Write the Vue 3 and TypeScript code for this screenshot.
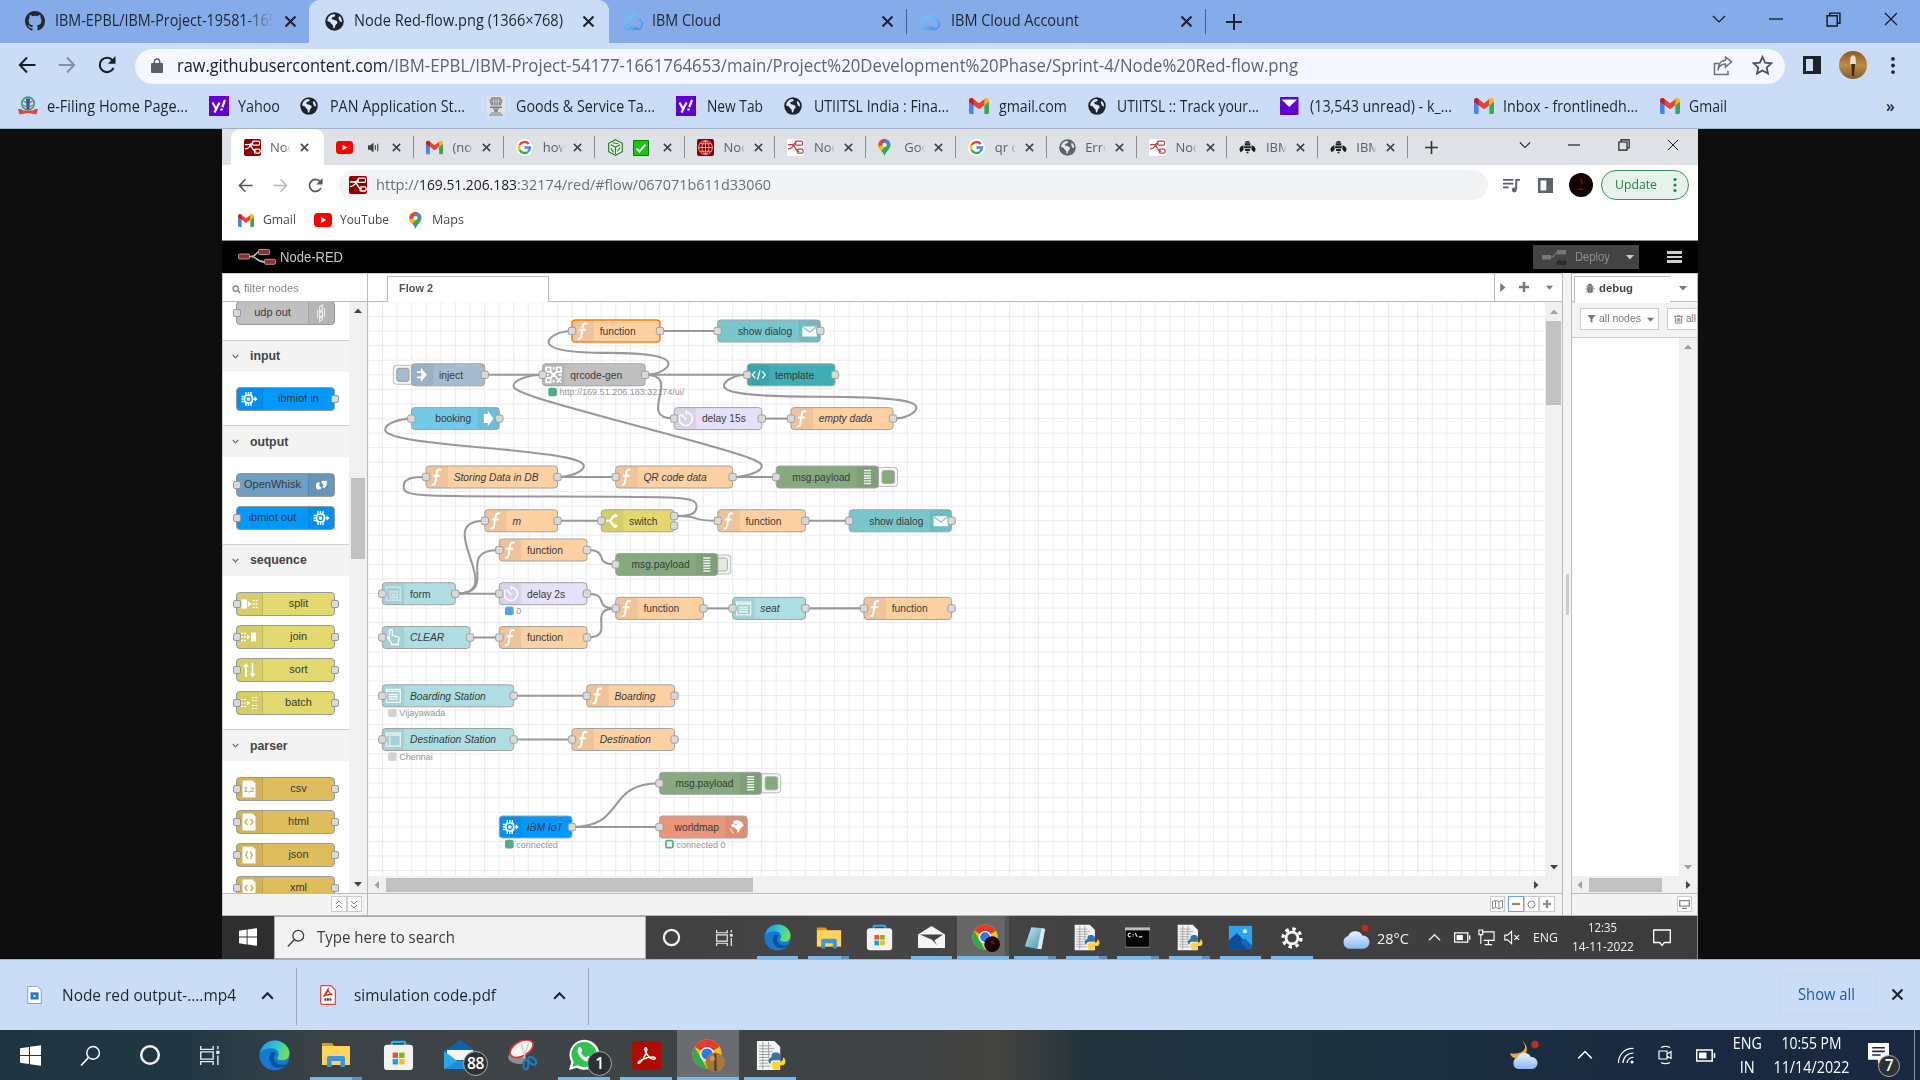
<script setup lang="ts">
import { h, type FunctionalComponent } from 'vue'

/* Icon drawn from the symbol sheet at the top of the template */
const Ico: FunctionalComponent<{ n: string; s: number; hh?: number }> = (p) =>
  h('svg', { width: p.s, height: p.hh ?? p.s, style: 'flex:none;display:block' }, [h('use', { href: '#i-' + p.n })])
Ico.props = ['n', 's', 'hh']

/* Condenses or widens a run of text to a given width in pixels */
const vFit = {
  mounted(el: HTMLElement, b: { value: number }) {
    const w = el.getBoundingClientRect().width
    if (!w || !b.value) return
    el.style.transform = `scaleX(${b.value / w})`
    el.style.marginRight = `${b.value - w}px`
  },
}

interface Mark { icon: string; text: string; x: number; tx: number; w: number }
const marks: Mark[] = [
  { icon: 'efile', text: 'e-Filing Home Page...', x: 18, tx: 47, w: 141 },
  { icon: 'yahoo', text: 'Yahoo', x: 209, tx: 238, w: 42 },
  { icon: 'globe', text: 'PAN Application St...', x: 300, tx: 330, w: 135 },
  { icon: 'emblem', text: 'Goods & Service Ta...', x: 486, tx: 516, w: 139 },
  { icon: 'yahoo', text: 'New Tab', x: 676, tx: 707, w: 56 },
  { icon: 'globe', text: 'UTIITSL India : Fina...', x: 784, tx: 814, w: 135 },
  { icon: 'gmail', text: 'gmail.com', x: 969, tx: 999, w: 68 },
  { icon: 'globe', text: 'UTIITSL :: Track your...', x: 1088, tx: 1117, w: 142 },
  { icon: 'ymail', text: '(13,543 unread) - k_...', x: 1280, tx: 1310, w: 142 },
  { icon: 'gmail', text: 'Inbox - frontlinedh...', x: 1474, tx: 1503, w: 135 },
  { icon: 'gmail', text: 'Gmail', x: 1660, tx: 1689, w: 38 },
]
const markWidth = (i: number) => (i + 1 < marks.length ? marks[i + 1].x : 1870) - marks[i].x

const innerTabs = [
  { icon: 'nrfav', text: 'Node', on: true },
  { icon: 'yt', text: '', mute: true },
  { icon: 'gmail', text: '(no s' },
  { icon: 'google', text: 'how t' },
  { icon: 'cube', text: '', check: true },
  { icon: 'redglobe', text: 'Node' },
  { icon: 'nrlight', text: 'Node' },
  { icon: 'pin', text: 'Goog' },
  { icon: 'google', text: 'qr co' },
  { icon: 'globe', text: 'Error' },
  { icon: 'nrlight', text: 'Node' },
  { icon: 'bee', text: 'IBM W' },
  { icon: 'bee', text: 'IBM W' },
]

interface PNode { label: string; color: string; icon: string; right?: boolean; in?: boolean; out?: boolean }
const sections: { name: string; nodes: PNode[] }[] = [
  { name: '', nodes: [{ label: 'udp out', color: '#c0c0c0', icon: 'udp', right: true, in: true }] },
  { name: 'input', nodes: [{ label: 'ibmiot in', color: '#0299ff', icon: 'iot', out: true }] },
  { name: 'output', nodes: [
    { label: 'OpenWhisk', color: '#6d9ec4', icon: 'whisk', right: true, in: true },
    { label: 'ibmiot out', color: '#0299ff', icon: 'iot', right: true, in: true } ] },
  { name: 'sequence', nodes: ['split', 'join', 'sort', 'batch'].map((l) => ({ label: l, color: '#e2d96e', icon: l, in: true, out: true })) },
  { name: 'parser', nodes: ['csv', 'html', 'json', 'xml'].map((l) => ({ label: l, color: '#debd5c', icon: l === 'xml' ? 'html' : l, in: true, out: true })) },
]

interface FNode {
  x: number; r: number; y: number; label: string; c: string; icon: string
  right?: boolean; it?: boolean; noIn?: boolean; noOut?: boolean; sel?: boolean; two?: boolean
  button?: 'left' | 'on' | 'off'; status?: { t: string; c: string; ring?: boolean }
}
const FN = '#fdd0a2', UI = '#aedee1', DLG = '#78c6ca', DBG = '#87a980'
const nodes: Record<string, FNode> = {
  f1: { x: 572, r: 660, y: 331, label: 'function', c: FN, icon: 'fn', sel: true },
  d1: { x: 717.6, r: 820.3, y: 331, label: 'show dialog', c: DLG, icon: 'mail', right: true },
  inj: { x: 411.4, r: 484.7, y: 374.8, label: 'inject', c: '#a6bbcf', icon: 'inject', noIn: true, button: 'left' },
  qr: { x: 542.6, r: 645.1, y: 374.8, label: 'qrcode-gen', c: '#c0c0c0', icon: 'qr', status: { t: 'http://169.51.206.183:32174/ui/', c: '#5a8' } },
  tpl: { x: 747.3, r: 835, y: 374.8, label: 'template', c: '#3fadb5', icon: 'code' },
  bk: { x: 411.4, r: 499.3, y: 418.6, label: 'booking', c: '#73c7e7', icon: 'arrow', right: true },
  d15: { x: 674.2, r: 761.8, y: 418.6, label: 'delay 15s', c: '#e6e0f8', icon: 'timer' },
  ed: { x: 791, r: 893, y: 418.6, label: 'empty dada', c: FN, icon: 'fn', it: true },
  st: { x: 426, r: 557.5, y: 477, label: 'Storing Data in DB', c: FN, icon: 'fn', it: true },
  qd: { x: 615.7, r: 732.6, y: 477, label: 'QR code data', c: FN, icon: 'fn', it: true },
  m1: { x: 776.2, r: 878.5, y: 477, label: 'msg.payload', c: DBG, icon: 'bars', right: true, noOut: true, button: 'on' },
  m: { x: 484.8, r: 557.6, y: 520.8, label: 'm', c: FN, icon: 'fn', it: true },
  sw: { x: 601.3, r: 674.2, y: 520.8, label: 'switch', c: '#e2d96e', icon: 'switch', two: true },
  f2: { x: 717.8, r: 805.4, y: 520.8, label: 'function', c: FN, icon: 'fn' },
  d2: { x: 849.2, r: 951.6, y: 520.8, label: 'show dialog', c: DLG, icon: 'mail', right: true },
  f3: { x: 499.3, r: 587, y: 550, label: 'function', c: FN, icon: 'fn' },
  m2: { x: 615.7, r: 717.8, y: 564.5, label: 'msg.payload', c: DBG, icon: 'bars', right: true, noOut: true, button: 'off' },
  fm: { x: 382.3, r: 455.3, y: 593.7, label: 'form', c: UI, icon: 'form' },
  d2s: { x: 499.3, r: 587, y: 593.7, label: 'delay 2s', c: '#e6e0f8', icon: 'timer', status: { t: '0', c: '#53a3f3' } },
  f4: { x: 615.7, r: 703.4, y: 608.4, label: 'function', c: FN, icon: 'fn' },
  se: { x: 732.6, r: 805.5, y: 608.4, label: 'seat', c: UI, icon: 'list', it: true },
  f5: { x: 864, r: 951.6, y: 608.4, label: 'function', c: FN, icon: 'fn' },
  cl: { x: 382.3, r: 470, y: 637.5, label: 'CLEAR', c: UI, icon: 'hand', it: true },
  f6: { x: 499.3, r: 587, y: 637.5, label: 'function', c: FN, icon: 'fn' },
  bs: { x: 382.3, r: 513.7, y: 695.8, label: 'Boarding Station', c: UI, icon: 'list', it: true, status: { t: 'Vijayawada', c: '#d3d3d3' } },
  bo: { x: 586.7, r: 674.5, y: 695.8, label: 'Boarding', c: FN, icon: 'fn', it: true },
  ds: { x: 382.3, r: 513.7, y: 739.5, label: 'Destination Station', c: UI, icon: 'table', it: true, status: { t: 'Chennai', c: '#d3d3d3' } },
  de: { x: 572, r: 674.5, y: 739.5, label: 'Destination', c: FN, icon: 'fn', it: true },
  m3: { x: 659.4, r: 761.7, y: 783.3, label: 'msg.payload', c: DBG, icon: 'bars', right: true, noOut: true, button: 'on' },
  iot: { x: 499.3, r: 572, y: 827, label: 'IBM IoT', c: '#0299ff', icon: 'iot', it: true, noIn: true, status: { t: 'connected', c: '#5a8' } },
  wm: { x: 659.4, r: 747.2, y: 827, label: 'worldmap', c: '#e9967a', icon: 'world', right: true, noOut: true, status: { t: 'connected 0', c: '#5a8', ring: true } },
}
const links: [string, string][] = [
  ['f1', 'd1'], ['inj', 'qr'], ['qr', 'f1'], ['qr', 'tpl'], ['qr', 'd15'], ['d15', 'ed'], ['ed', 'tpl'], ['st', 'bk'],
  ['st', 'qd'], ['qd', 'qr'], ['qd', 'm1'], ['sw', 'st'], ['m', 'sw'], ['sw', 'f2'], ['f2', 'd2'], ['fm', 'm'], ['fm', 'f3'],
  ['fm', 'd2s'], ['f3', 'm2'], ['d2s', 'f4'], ['f6', 'f4'], ['f4', 'se'], ['se', 'f5'], ['cl', 'f6'], ['bs', 'bo'],
  ['ds', 'de'], ['iot', 'm3'], ['iot', 'wm'],
]
const K = 0.729
function wire([a, b]: [string, string]): string {
  const A = nodes[a], B = nodes[b]
  const ox = A.r, oy = A.two ? A.y - 4.8 : A.y, dx0 = B.x, dy0 = B.y
  const dx = dx0 - ox, dy = dy0 - oy, W = 100 * K, H = 30 * K
  if (dx > 0) {
    const d = Math.hypot(dx, dy)
    const s = d < W ? 0.75 - 0.75 * ((W - d) / W) : 0.75
    return `M${ox} ${oy}C${ox + W * s} ${oy} ${dx0 - W * s} ${dy0} ${dx0} ${dy0}`
  }
  const s = 0.4 - 0.2 * Math.max(0, (W - Math.min(Math.abs(dx), Math.abs(dy))) / W)
  const up = dy <= 0, cp = H / 2
  const mx = dx0 - dx / 2, my = dy0 - dy / 2, y1 = (dy0 + my) / 2
  const tx = ox + W * s, bx = dx0 - W * s
  const ty = up ? Math.max(y1 - dy / 2, oy - cp) : Math.min(y1 - dy / 2, oy + cp)
  const by = up ? Math.min(y1, dy0 + cp) : Math.max(y1, dy0 - cp)
  const x1 = (ox + tx) / 2
  let c1 = up ? Math.min(oy, ty + cp) : Math.max(oy, ty - cp)
  const c2 = up ? Math.max(my, ty - cp) : Math.min(my, ty + cp)
  let c3 = up ? Math.min(my, by + cp) : Math.max(my, by - cp)
  const sg = up ? -1 : 1
  if (Math.abs(c2 - (ty + sg * cp)) < 0.01) {
    if (Math.abs(dy) < cp * 10) c1 = ty - (sg * cp) / 2
    c3 = by - (sg * cp) / 2
  }
  return `M${ox} ${oy}C${x1} ${oy} ${tx} ${c1} ${tx} ${ty}S${x1} ${c2} ${mx} ${my}S${bx} ${c3} ${bx} ${by}S${(dx0 + bx) / 2} ${dy0} ${dx0} ${dy0}`
}

const innerApps = [
  { n: 'edge', s: 27, u: 1 }, { n: 'folder', s: 26, u: 2 }, { n: 'store', s: 27, u: 0 }, { n: 'openmail', s: 27, u: 1 },
  { n: 'chromered', s: 28, u: 1, on: true }, { n: 'note', s: 26, u: 2 }, { n: 'py', s: 27, u: 2 }, { n: 'cmd', s: 25, u: 2 },
  { n: 'py', s: 27, u: 2 }, { n: 'photos', s: 25, u: 1 }, { n: 'gear', s: 22, u: 1 },
]
const apps = [
  { n: 'edge', s: 31, u: 0 }, { n: 'folder', s: 30, u: 2 }, { n: 'store', s: 31, u: 0 }, { n: 'winmail', s: 32, u: 0, badge: '88' },
  { n: 'snip', s: 31, u: 0 }, { n: 'wa', s: 32, u: 1, badge: '1' }, { n: 'acro', s: 29, u: 1 }, { n: 'chromegold', s: 33, u: 1, on: true }, { n: 'py', s: 31, u: 1 },
]
</script>

<template>
  <svg class="sheet" width="0" height="0" aria-hidden="true">
    <defs>
      <linearGradient id="g-edge" x1="0" y1="0" x2="1" y2="0.3"><stop offset="0" stop-color="#1a8fe0" /><stop offset=".55" stop-color="#2fc3d8" /><stop offset="1" stop-color="#6be05a" /></linearGradient>
      <linearGradient id="g-ibm" x1="0" y1="0" x2="1" y2="1"><stop offset="0" stop-color="#66d9ee" /><stop offset="1" stop-color="#4589ff" /></linearGradient>
      <linearGradient id="g-cloud" x1="0" y1="0" x2="0" y2="1"><stop offset="0" stop-color="#eaf2ff" /><stop offset="1" stop-color="#8bb7f2" /></linearGradient>
      <linearGradient id="g-note" x1="0" y1="0" x2="1" y2="1"><stop offset="0" stop-color="#c9e9ee" /><stop offset="1" stop-color="#3a93ad" /></linearGradient>
      <linearGradient id="g-av" x1="0" y1="0" x2="0" y2="1"><stop offset="0" stop-color="#8a5a24" /><stop offset=".5" stop-color="#c08a45" /><stop offset="1" stop-color="#7a6230" /></linearGradient>
    </defs>
    <symbol id="i-github" viewBox="0 0 16 16"><path fill="#24292f" d="M8 0C3.58 0 0 3.58 0 8c0 3.54 2.29 6.53 5.47 7.59.4.07.55-.17.55-.38 0-.19-.01-.82-.01-1.49-2.01.37-2.53-.49-2.69-.94-.09-.23-.48-.94-.82-1.13-.28-.15-.68-.52-.01-.53.63-.01 1.08.58 1.23.82.72 1.21 1.87.87 2.33.66.07-.52.28-.87.51-1.07-1.78-.2-3.64-.89-3.64-3.95 0-.87.31-1.59.82-2.15-.08-.2-.36-1.02.08-2.12 0 0 .67-.21 2.2.82a7.6 7.6 0 0 1 4 0c1.53-1.04 2.2-.82 2.2-.82.44 1.1.16 1.92.08 2.12.51.56.82 1.27.82 2.15 0 3.07-1.87 3.75-3.65 3.95.29.25.54.73.54 1.48 0 1.07-.01 1.93-.01 2.2 0 .21.15.46.55.38A8 8 0 0 0 16 8c0-4.42-3.58-8-8-8z" /></symbol>
    <symbol id="i-globe" viewBox="0 0 16 16"><circle cx="8" cy="8" r="7.800" fill="currentColor" /><path fill="#dce6f6" d="M7 1.800c1.600.3 2 .9 1.300 1.700-.8.800-2.300.5-2.700 1.600-.3.900.8 1.200 1.600 1.500 1.300.400 2.800.600 3.200 1.800.3 1.200-1 1.600-1.500 2.600-.4.900-.2 2-1.400 2.900-.7-.3-.5-1.400-.6-2.200-.2-1.200-1.600-1.200-1.900-2.300-.2-.9-1.300-1.500-3-1.900C2 4.800 4 2.300 7 1.800zM12.300 3.600c1.200 1.100 2 2.600 1.900 4.600-.8.500-1.700-.2-2-1-.3-1-1-1.700-.7-2.500.1-.5.400-.8.800-1.100z" /></symbol>
    <symbol id="i-ibm" viewBox="0 0 20 20"><path d="M6 17.500a4 4 0 0 1-1-7.900A5.300 5.300 0 0 1 15 8.500a4.600 4.600 0 0 1-.7 9H6M5 12.500c1 3 3 3.500 9 3.500" fill="none" stroke="url(#g-ibm)" stroke-width="1.500" /><path d="M6 3l.7 1.600M9.800 1.200v2M13.600 3l-.7 1.600M3.200 6l1.300.8" stroke="#67c9f5" stroke-width="1.200" /></symbol>
    <symbol id="i-x" viewBox="0 0 12 12"><path d="M2 2l8 8M10 2l-8 8" stroke="currentColor" stroke-width="1.700" /></symbol>
    <symbol id="i-xthin" viewBox="0 0 14 14"><path d="M1 1l12 12M13 1L1 13" stroke="currentColor" stroke-width="1.100" /></symbol>
    <symbol id="i-min" viewBox="0 0 14 14"><path d="M0 7h14" stroke="currentColor" stroke-width="1.300" /></symbol>
    <symbol id="i-restore" viewBox="0 0 14 14"><path d="M1 3.500h9.500V13H1zM3.500 3.500V1H13v9.500h-2.500" fill="none" stroke="currentColor" stroke-width="1.300" /></symbol>
    <symbol id="i-down" viewBox="0 0 14 14"><path d="M1 4l6 6 6-6" fill="none" stroke="currentColor" stroke-width="1.200" /></symbol>
    <symbol id="i-chev" viewBox="0 0 8 8"><path d="M.8 2.200L4 5.500l3.200-3.300" fill="none" stroke="#666" stroke-width="1.300" /></symbol>
    <symbol id="i-up" viewBox="0 0 14 14"><path d="M1 10l6-6 6 6" fill="none" stroke="currentColor" stroke-width="1.300" /></symbol>
    <symbol id="i-upbold" viewBox="0 0 14 14"><path d="M2 10l5-5 5 5" fill="none" stroke="currentColor" stroke-width="2" /></symbol>
    <symbol id="i-plus" viewBox="0 0 16 16"><path d="M8 0v16M0 8h16" stroke="currentColor" stroke-width="2" /></symbol>
    <symbol id="i-back" viewBox="0 0 18 18"><path d="M9 1.500L1.800 9 9 16.500M2 9h15.500" fill="none" stroke="currentColor" stroke-width="2" /></symbol>
    <symbol id="i-fwd" viewBox="0 0 18 18"><path d="M9 1.500L16.200 9 9 16.500M16 9H.5" fill="none" stroke="currentColor" stroke-width="2" /></symbol>
    <symbol id="i-reload" viewBox="0 0 18 18"><path d="M15.500 12A7.200 7.200 0 1 1 14.600 4.400L16 6" fill="none" stroke="currentColor" stroke-width="2.100" /><path d="M17.500 0v7.700H9.900z" fill="currentColor" /></symbol>
    <symbol id="i-lock" viewBox="0 0 12 15"><path fill="#5a6068" fill-rule="evenodd" d="M2.600 5V3.600a3.400 3.400 0 0 1 6.800 0V5H11a1 1 0 0 1 1 1v8a1 1 0 0 1-1 1H1a1 1 0 0 1-1-1V6a1 1 0 0 1 1-1zm1.500 0h3.800V3.600a1.900 1.900 0 0 0-3.800 0z" /></symbol>
    <symbol id="i-share" viewBox="0 0 20 20"><path d="M6 7.500H1.500v11H15V15M5 14.500c.5-4 3-6.500 7.500-6.500V11l6-5.200-6-4.800v3.200C7.500 4.500 5 9 5 14.500z" fill="none" stroke="#6b7280" stroke-width="1.500" /></symbol>
    <symbol id="i-star" viewBox="0 0 20 20"><path d="M10 1.800l2.500 5.400 5.900.7-4.400 4 1.200 5.800L10 14.800l-5.200 2.900L6 11.900l-4.400-4 5.900-.7z" fill="none" stroke="#4b5260" stroke-width="1.700" /></symbol>
    <symbol id="i-panel" viewBox="0 0 18 18"><path d="M0 0h18v18H0zM3 3v12h7V3z" fill-rule="evenodd" fill="currentColor" /></symbol>
    <symbol id="i-avatar" viewBox="0 0 28 28"><circle cx="14" cy="14" r="14" fill="url(#g-av)" /><path d="M11.500 6l2.500-2 2.500 2 .5 7h-6z" fill="#eadfcb" /><path d="M12.500 13h3.500l-1 12h-2z" fill="#3b2a1c" /></symbol>
    <symbol id="i-dots" viewBox="0 0 4 18"><circle cx="2" cy="2" r="2" fill="currentColor" /><circle cx="2" cy="9" r="2" fill="currentColor" /><circle cx="2" cy="16" r="2" fill="currentColor" /></symbol>
    <symbol id="i-efile" viewBox="0 0 20 20"><circle cx="10" cy="7.500" r="6.300" fill="#cfe0f5" stroke="#3aa56a" stroke-width="1.700" /><path d="M8 2.500h4l-.5 11h-3z" fill="#2a5caa" /><path d="M5.500 5l3 2M14.500 5l-3 2M5 9l3 1.500M15 9l-3 1.500" stroke="#d94848" stroke-width="1.200" /><path d="M0 13h3l2 1.500h10L17 13h3l-1.500 5.500-8.500-1.500-8.500 1.500z" fill="#d94848" /></symbol>
    <symbol id="i-yahoo" viewBox="0 0 20 20"><path fill="#5f01d1" d="M0 0h20v20H0z" /><path d="M3.500 6.500l3.600 6.500M10.500 6.500L5.500 16.500" stroke="#fff" stroke-width="2.200" /><path d="M16 4l-2.700 7" stroke="#fff" stroke-width="2.200" /><circle cx="12.600" cy="13.500" r="1.300" fill="#fff" /></symbol>
    <symbol id="i-emblem" viewBox="0 0 20 20"><path fill="#dfe2e6" d="M1 0h18v20H1z" /><path d="M6 1h8l2.500 3.500-1.500 5H5l-1.500-5z" fill="#8a8d92" /><path d="M7.500 2v7M10 1v9M12.500 2v7M5 5h10" stroke="#c9ccd0" stroke-width=".8" /><path d="M4 10.500h12v1.500H4zM7 12.500h6v1.300H7zM8.500 14h3v2h-3zM5 16.500h10v1H5zM3 18.500h14v1H3z" fill="#777b80" /></symbol>
    <symbol id="i-gmail" viewBox="0 0 20 16"><path fill="#4285f4" d="M0 3v11.500c0 .8.700 1.500 1.500 1.500H4.600V7z" /><path fill="#34a853" d="M20 3v11.500c0 .8-.7 1.500-1.500 1.500h-3.100V7z" /><path fill="#ea4335" d="M0 2.500C0 .5 2.200-.6 3.800.6L10 5.300 16.200.6 15.400 7.200 10 11.200 4.600 7.200 0 3.800z" /><path fill="#fbbc04" d="M15.400 1.200l.8-.6c1.600-1.200 3.800-.1 3.800 1.900v1.300l-4.600 3.400z" /><path fill="#c5221f" d="M0 2.500v1.300l4.600 3.400V1.200L3.800.6C2.200-.6 0 .5 0 2.500z" /></symbol>
    <symbol id="i-ymail" viewBox="0 0 20 20"><rect y="1" width="18.500" height="18" rx="1" fill="#5f01d1" /><path d="M1.500 3.500h15.500L9.300 11z" fill="#fff" /></symbol>
    <symbol id="i-yt" viewBox="0 0 18 14"><rect width="18" height="14" rx="3.500" fill="#f00" /><path d="M7 4l5 3-5 3z" fill="#fff" /></symbol>
    <symbol id="i-google" viewBox="0 0 18 18"><circle cx="9" cy="9" r="9" fill="#fff" /><path d="M13.500 5.200A6 6 0 0 0 3.800 6.300" fill="none" stroke="#ea4335" stroke-width="2.500" /><path d="M3.800 6.300a6 6 0 0 0 0 5.400" fill="none" stroke="#fbbc05" stroke-width="2.500" /><path d="M3.800 11.700a6 6 0 0 0 8.800 2" fill="none" stroke="#34a853" stroke-width="2.500" /><path d="M9 9h5.800a6 6 0 0 1-2.200 4.700" fill="none" stroke="#4285f4" stroke-width="2.500" /></symbol>
    <symbol id="i-cube" viewBox="0 0 18 18"><path d="M9 .8l7.200 3.700v9L9 17.200l-7.200-3.700v-9z" fill="#e7f3e4" stroke="#2e7d32" stroke-width="1.300" /><path d="M4 6l5 2.500L14 6M9 8.500V16M4 10l3 4M11 13l3-4M6 4l6 1" fill="none" stroke="#2e7d32" stroke-width="1.200" /></symbol>
    <symbol id="i-check" viewBox="0 0 16 16"><path d="M.5.500h15v15H.5z" fill="#16c60c" stroke="#0c7a08" /><path d="M3.500 8.500l3 3 6-7" fill="none" stroke="#fff" stroke-width="2" /></symbol>
    <symbol id="i-redglobe" viewBox="0 0 18 18"><rect width="18" height="18" rx="2" fill="#8f0000" /><circle cx="9" cy="9" r="7.300" fill="none" stroke="#e6b5b5" /><path d="M9 1.500v15M1.500 9h15M3 5h12M3 13h12M9 1.700c-5 4-5 10.600 0 14.600M9 1.700c5 4 5 10.600 0 14.600" fill="none" stroke="#e6b5b5" stroke-width=".9" /></symbol>
    <symbol id="i-nrshape" viewBox="0 0 18 18"><path d="M1 6h4c4 0 3 7 8 7M5 6c3 0 3-2 5-2" fill="none" stroke="currentColor" stroke-width="1.300" /><rect x="9" y="2.200" width="7.500" height="4.200" rx="1.200" fill="none" stroke="currentColor" stroke-width="1.300" /><rect x="11" y="10.800" width="6" height="4.200" rx="1.200" fill="none" stroke="currentColor" stroke-width="1.300" /><path d="M1 10.500c4 .5 5-3 8-5" fill="none" stroke="currentColor" stroke-width="1.300" /></symbol>
    <symbol id="i-nrfav" viewBox="0 0 18 18"><rect width="18" height="18" rx="2" fill="#8f0000" /><use href="#i-nrshape" width="18" height="18" color="#fff" /></symbol>
    <symbol id="i-nrlight" viewBox="0 0 18 18"><rect width="18" height="18" rx="2" fill="#fff" /><use href="#i-nrshape" width="18" height="18" color="#b5454a" /></symbol>
    <symbol id="i-pin" viewBox="0 0 12 17"><path d="M6 0a6 6 0 0 1 6 6c0 4-4.500 6-6 11C4.500 12 0 10 0 6a6 6 0 0 1 6-6z" fill="#34a853" /><path d="M0 6a6 6 0 0 1 1.500-4L7 7l-4.500 5C1 10 0 8.500 0 6z" fill="#fbbc04" /><path d="M1.400 2A6 6 0 0 1 7.500.2L3.500 6.500.2 7.500C-.2 5 .3 3.500 1.400 2z" fill="#ea4335" /><path d="M7.500.2A6 6 0 0 1 11.400 3.400L6 8 3.500 6z" fill="#4285f4" /><circle cx="6" cy="6" r="2.100" fill="#fff" /></symbol>
    <symbol id="i-bee" viewBox="0 0 18 14"><path d="M9 0c2 0 2.600 1 2.600 2H6.400C6.400 1 7 0 9 0zM6 2.600h6v2.200H6zM5.500 5.600h7v2.200h-7zM6.500 8.600h5v2h-5zM8 11.400h2v1.800H8zM4.800 4.500v5L2 12C-.8 9.500.5 5.500 4.800 4.500zM13.200 4.500v5L16 12c2.800-2.500 1.500-6.500-2.800-7.500z" fill="#1c1c1c" /></symbol>
    <symbol id="i-speaker" viewBox="0 0 14 14"><path d="M0 4.500h2.500L6 1.500v11L2.500 9.500H0z" fill="#444" /><path d="M8 4.500v5M10.500 3v8" stroke="#444" stroke-width="1.200" /></symbol>
    <symbol id="i-queue" viewBox="0 0 18 16"><path d="M0 2h11M0 6h11M0 10h6M14 1v11M14 2h4" stroke="#5f6368" stroke-width="2" /><circle cx="12" cy="12.800" r="2.600" fill="#5f6368" /></symbol>
    <symbol id="i-avred" viewBox="0 0 24 24"><circle cx="12" cy="12" r="12" fill="#120203" /><path d="M11 6l2-1 1 6-2 1zM7 17l5-2 5 2z" fill="#5e1010" /></symbol>
    <symbol id="i-nrlogo" viewBox="0 0 38 16"><path d="M8 7.500h5c6 0 4-5 9-5M13 7.500c6 0 5 5.500 14 5.500" fill="none" stroke="#bbb" stroke-width="1.500" /><g fill="#8f2f2f" stroke="#c0b0b0" stroke-width=".8"><rect x=".5" y="5" width="11" height="5" rx="1" /><rect x="20.500" y=".5" width="11" height="5" rx="1" /><rect x="26.500" y="10.300" width="11" height="5" rx="1" /></g></symbol>
    <symbol id="i-deploy" viewBox="0 0 24 16"><path d="M7 8h3c4 0 2-5 6-5" fill="none" stroke="#777" stroke-width="1.200" /><path d="M0 6h9v4.500H0zM15 1h9v4.500h-9z" fill="#777" /><path d="M15 11.500h9V16h-9z" fill="#2c2c2c" /></symbol>
    <symbol id="i-search" viewBox="0 0 20 20"><circle cx="12.500" cy="7.500" r="6" fill="none" stroke="currentColor" stroke-width="1.400" /><path d="M8 12l-7 7.500" stroke="currentColor" stroke-width="1.500" /></symbol>
    <symbol id="i-find" viewBox="0 0 10 10"><circle cx="4" cy="4" r="3" fill="none" stroke="#777" stroke-width="1.300" /><path d="M6.200 6.200L9 9" stroke="#777" stroke-width="1.500" /></symbol>
    <symbol id="i-caret" viewBox="0 0 8 8"><path d="M0 2h8L4 6.500z" fill="currentColor" /></symbol>
    <symbol id="i-bug" viewBox="0 0 12 12"><path d="M3.500 3a2.500 2.500 0 0 1 5 0zM3 4h2.600v7C4 11 3 10 3 8zM9 4H6.400v7C8 11 9 10 9 8zM0 6.500h3M9 6.500h3M1 3l2 1.500M11 3L9 4.500M1 11l2-2M11 11L9 9" fill="#777" stroke="#777" stroke-width=".9" /></symbol>
    <symbol id="i-filter" viewBox="0 0 10 10"><path d="M.5 0h9L6 4.500V9L4 7.500v-3z" fill="#777" /></symbol>
    <symbol id="i-trash" viewBox="0 0 10 10"><path d="M0 1.500h10M3 1h4M1.500 2v7h7V2M3.500 3.500v4M5 3.500v4M6.500 3.500v4" fill="none" stroke="#888" stroke-width="1.100" /></symbol>
    <!-- node icons -->
    <symbol id="i-fn" viewBox="0 0 22 22"><path d="M15 4.300c-2-1.700-3.800-.6-4.200 2.200L9.300 16c-.4 2.500-1.700 3.200-3.300 2.200M7.200 9.800h6.600" fill="none" stroke="#fff" stroke-width="2" /></symbol>
    <symbol id="i-mail" viewBox="0 0 22 22"><path d="M4 6.500h14.500v10H4z" fill="#fff" /><path d="M4 6.700l7.300 5.500 7.200-5.500" fill="none" stroke="#78c6ca" stroke-width="1.300" /></symbol>
    <symbol id="i-inject" viewBox="0 0 22 22"><path d="M9.500 4l6 7-6 7v-3.500h-4V12.700h4.500V9.300H5.500V7.500h4z" fill="#fff" /></symbol>
    <symbol id="i-arrow" viewBox="0 0 22 22"><path d="M6.500 6.500h4V3l5.500 8-5.500 8v-3.500h-4z" fill="#fff" /></symbol>
    <symbol id="i-qr" viewBox="0 0 22 22"><g fill="none" stroke="#fff" stroke-width="1.700"><path d="M3.500 3.500H8v4.500H3.500zM14 3.500h4.500V8H14zM3.500 14H8v4.500H3.500z" /><path d="M8 8l6 6M14 8l-6 6M11 3v3M11 16v3M3 11h3M16 11h3M14 14l4.500 4.500M18.500 14L14 18.500" /></g><path d="M9 9h4v4H9z" fill="#fff" /></symbol>
    <symbol id="i-code" viewBox="0 0 22 22"><path d="M8 7.500L5 11l3 3.500M15 7.500l3 3.500-3 3.500M12.700 6.500l-2.400 9" fill="none" stroke="#fff" stroke-width="1.300" /></symbol>
    <symbol id="i-timer" viewBox="0 0 22 22"><path d="M12 4.500a6.700 6.700 0 1 1-5.500 2.200M12 3v4M12 12L7.500 7" fill="none" stroke="#fff" stroke-width="1.500" /></symbol>
    <symbol id="i-bars" viewBox="0 0 22 22"><path d="M7.500 4.500h7M7.500 7.100h7M7.500 9.700h7M7.500 12.300h7M7.500 14.900h7M7.500 17.500h7" stroke="#fff" stroke-opacity=".85" stroke-width="1.400" /></symbol>
    <symbol id="i-switch" viewBox="0 0 22 22"><path d="M5 11h3c3 0 2-5 6-5h1M8 11c3 0 2 5.500 6 5.500h1" fill="none" stroke="#fff" stroke-width="2" /><path d="M13 3.500l4 2.500-4 2.500zM13 13.800l4 2.500-4 2.500z" fill="#fff" /></symbol>
    <symbol id="i-form" viewBox="0 0 22 22"><path d="M4 4.500h14v13H4zM8 9h7v6H8z" fill="none" stroke="#fff" stroke-opacity=".45" stroke-width="1.500" /><path d="M10 11h3v3h-3z" fill="#fff" opacity=".45" /></symbol>
    <symbol id="i-list" viewBox="0 0 22 22"><path d="M4 4.500h14v13H4z" fill="none" stroke="#fff" stroke-opacity=".8" stroke-width="1.300" /><path d="M4 6.300h14M6.500 9.700h9M6.500 12h9M6.500 14.300h9" stroke="#fff" stroke-opacity=".85" stroke-width="1.400" /></symbol>
    <symbol id="i-table" viewBox="0 0 22 22"><path d="M4 4.500h14v13H4zM4 6.500h14M7.500 8v9" fill="none" stroke="#fff" stroke-opacity=".7" stroke-width="1.400" /></symbol>
    <symbol id="i-hand" viewBox="0 0 22 22"><path d="M7 9V4.500a1.500 1.500 0 0 1 3 0V9l6 1.500c1.500.5 1 3 0 5V18H9v-2l-4-5c0-1.500 1-1.500 2-.5v2" fill="none" stroke="#fff" stroke-opacity=".9" stroke-width="1.300" /></symbol>
    <symbol id="i-iot" viewBox="0 0 22 22"><rect x="6" y="6.500" width="9" height="9" rx="2" fill="#fff" /><path d="M3.500 8.500H6M3.500 11H6M3.500 13.500H6M8 4v3M10.500 4v3M13 4v3M8 15v3M10.500 15v3M13 15v3M15 11h3" stroke="#fff" stroke-width="1.400" /><path d="M16.500 8.200l3 2.800-3 2.800z" fill="#fff" /><circle cx="10.500" cy="11" r="2.500" fill="none" stroke="#0299ff" stroke-width="1.300" /></symbol>
    <symbol id="i-world" viewBox="0 0 22 22"><path d="M8 5l4-1 4 1.500 2.500 4-1.500 1.500-1.500 1-1.500 3.500-1.500 1.500-1-3.500-2.500-2-2.500-.5-.5-2.500 2.500-.5z" fill="#fff" /><path d="M9.500 8.500l2.500-.5" stroke="#e9967a" stroke-width="1.200" /><path d="M5 12.500l1.500 3 2 1.500" stroke="#fff" fill="none" /></symbol>
    <symbol id="i-udp" viewBox="0 0 22 22"><path d="M9.500 5l3-2v4l-3 3zM9.500 11l3-2v4l-3 3zM9.500 16.500l3-2v3l-3 2zM14.500 6v9M7.500 8v8" stroke="#fff" fill="none" stroke-width="1.100" opacity=".75" /></symbol>
    <symbol id="i-whisk" viewBox="0 0 22 22"><path d="M6 10.500a3 3 0 0 1 4-2l-1 2.500 2.500 3a3 3 0 0 1-5.500-.5zM16.500 11.500a3 3 0 0 1-4 2l1-2.500L11 8a3 3 0 0 1 4-1l2-.5z" fill="#fff" /></symbol>
    <symbol id="i-split" viewBox="0 0 22 22"><path d="M3.500 6.500h5.500v9H3.500zM10 8l3.500 3-3.500 3z" fill="#fff" /><path d="M14.500 7.500h5M14.500 11h5M14.500 14.500h5" stroke="#fff" stroke-width="1.500" stroke-dasharray="2 1" /></symbol>
    <symbol id="i-join" viewBox="0 0 22 22"><path d="M13 6.500h5v9h-5zM9 8l3 3-3 3z" fill="#fff" /><path d="M3 7.500h5M3 11h5M3 14.500h5" stroke="#fff" stroke-width="1.500" stroke-dasharray="2 1" /></symbol>
    <symbol id="i-sort" viewBox="0 0 22 22"><path d="M8 6v12M14.500 4v12" stroke="#fff" stroke-width="1.700" /><path d="M5 8l3-4 3 4zM11.500 14.500l3 4 3-4z" fill="#fff" /></symbol>
    <symbol id="i-batch" viewBox="0 0 22 22"><path d="M3 7.500h5M3 11h5M3 14.500h5M14 5.500h5M14 8.500h5M14 13.500h5M14 16.500h5" stroke="#fff" stroke-width="1.200" stroke-dasharray="2 1" /><path d="M9 8.500l3 2.500-3 2.500z" fill="#fff" /></symbol>
    <symbol id="i-page" viewBox="0 0 22 22"><path d="M4.500 2.500h10l3 3v14h-13z" fill="#fff" /></symbol>
    <symbol id="i-csv" viewBox="0 0 22 22"><use href="#i-page" width="22" height="22" /><text x="11" y="14" font-size="8" font-weight="700" text-anchor="middle" fill="#cfae50" font-family="Liberation Sans, sans-serif">1,2</text></symbol>
    <symbol id="i-html" viewBox="0 0 22 22"><use href="#i-page" width="22" height="22" /><path d="M9.500 8L7 11l2.500 3M12.500 8l2.500 3-2.500 3" fill="none" stroke="#cfae50" stroke-width="1.400" /></symbol>
    <symbol id="i-json" viewBox="0 0 22 22"><use href="#i-page" width="22" height="22" /><path d="M9.800 7.500c-1.800 0-.3 3-2.300 3.500 2 .5.500 3.500 2.300 3.500M12.200 7.500c1.800 0 .3 3 2.300 3.500-2 .5-.5 3.500-2.300 3.500" fill="none" stroke="#cfae50" stroke-width="1.400" /></symbol>
    <!-- desktop icons -->
    <symbol id="i-win" viewBox="0 0 20 20"><path d="M0 3l8.500-1.200v7.700H0zM9.500 1.700L20 .2v9.300H9.500zM0 10.500h8.500v7.700L0 17zM9.500 10.500H20v9.300L9.500 18.300z" fill="#fff" /></symbol>
    <symbol id="i-ring" viewBox="0 0 20 20"><circle cx="10" cy="10" r="8" fill="none" stroke="#f0f0f0" stroke-width="2.300" /></symbol>
    <symbol id="i-view" viewBox="0 0 20 20"><path d="M.7 1v3.200h11.800V1M.7 19v-3.200h11.800V19M.7 6.500h11.800v7H.7zM17 1v3M17 10v9" fill="none" stroke="#eee" stroke-width="1.300" /><path d="M15.500 5.500h3v3h-3z" fill="#eee" /></symbol>
    <symbol id="i-edge" viewBox="0 0 32 32"><circle cx="16" cy="16" r="15.500" fill="#1479d0" /><path d="M.8 14C2 5.500 9 .3 16.500.5 25 .7 31.500 7 31.500 13.500c0 5-3.500 7.500-7.500 7.500-4 0-5.300-1.200-5.300-2.200 0-1 1.500-1.300 1.500-4 0-3.500-3.200-6.300-7.700-6.300C7 8.500 3 11 .8 14z" fill="url(#g-edge)" /><path d="M12.500 13C9 17 10 26.500 18 28.500c4.500 1 8.500-1 11-4-4.500 2.500-12 1-13.500-5-.7-3 .5-4.500 1.500-5.500-1.200-1.200-3-1.800-4.500-1z" fill="#0b4f9e" /></symbol>
    <symbol id="i-folder" viewBox="0 0 30 30"><path d="M1 3h10l3 4H1z" fill="#e19a0c" /><path d="M1 6h28v19H1z" fill="#ffd35c" /><path d="M6 27v-9q0-2 2-2h14q2 0 2 2v9h-4.500v-6h-9v6z" fill="#3b96dc" /></symbol>
    <symbol id="i-store" viewBox="0 0 30 32"><path d="M8 8V3.500Q8 2 9.500 2h11Q22 2 22 3.500V8" fill="none" stroke="#1db2f5" stroke-width="2.300" /><rect y="5" width="30" height="26" rx="3.500" fill="#f2f2f2" /><path d="M9 13h5.500v5.500H9z" fill="#f25022" /><path d="M15.700 13h5.500v5.500h-5.500z" fill="#7fba00" /><path d="M9 19.700h5.500v5.500H9z" fill="#00a4ef" /><path d="M15.700 19.700h5.500v5.500h-5.500z" fill="#ffb900" /></symbol>
    <symbol id="i-openmail" viewBox="0 0 28 28"><path d="M0 11L14 2l14 9v14H0z" fill="#f4f4f4" /><path d="M2 11h24l-9 6 3 5-6-6z" fill="#444" /></symbol>
    <symbol id="i-winmail" viewBox="0 0 32 32"><path d="M0 12L16 1l16 11v4H0z" fill="#0a64ad" /><path d="M3 11h26v10H3z" fill="#f3f3f3" /><path d="M0 12l16 12L32 12v18H0z" fill="#28a8ea" /><path d="M0 30l16-9 16 9z" fill="#1b8fd8" /></symbol>
    <symbol id="i-snip" viewBox="0 0 32 32"><ellipse cx="10" cy="19" rx="9" ry="5.500" fill="#8f8f8f" transform="rotate(15 10 19)" /><ellipse cx="15" cy="9" rx="13" ry="7.500" fill="#f6f6f6" stroke="#d23c3c" stroke-width="1.800" transform="rotate(-30 15 9)" /><path d="M15 5l4 14M22 4l-5 15" stroke="#c9c9c9" stroke-width="1.300" /><g fill="none" stroke="#1a7fc0" stroke-width="2.200"><ellipse cx="19.500" cy="25.500" rx="2.400" ry="5" /><ellipse cx="26" cy="21.500" rx="2.800" ry="5" transform="rotate(-48 26 21.500)" /></g></symbol>
    <symbol id="i-wa" viewBox="0 0 32 32"><path d="M1 31l2.300-8A15 15 0 1 1 9 28.800z" fill="#fff" /><path d="M4.500 27.700l1.300-5A12.500 12.500 0 1 1 9.800 26.300z" fill="#2fc351" /><path d="M10.500 8.500c1-1 2.300-.5 2.600.3l1 2.500c.3.800-1.300 1.700-1.100 2.300 1 2.200 2.700 3.900 5 4.900.7.300 1.600-1.700 2.300-1.500l3 1.500c.8.500-.2 3-1.700 3.700C16 24.500 7 14.500 10.500 8.500z" fill="#fff" /></symbol>
    <symbol id="i-acro" viewBox="0 0 30 30"><rect width="30" height="30" rx="4" fill="#b10b00" /><path d="M7 23c3-1 8-9 8.300-14 0-3-2.300-2.500-2 0 .5 4 5 9.500 9.200 9.800 2.500 0 2-2.200-.5-2.300-5-.2-9 1.300-14 4-2 1.300-2 2.500-1 2.500z" fill="none" stroke="#fff" stroke-width="1.500" /></symbol>
    <symbol id="i-chrome" viewBox="0 0 32 32"><circle cx="16" cy="16" r="15.500" fill="#fbc116" /><path d="M16 16L2.600 8.300A15.500 15.500 0 0 1 29.400 8.300z" fill="#e33b2e" /><path d="M2.600 8.300L9.300 20 16 31.500A15.500 15.500 0 0 1 2.600 8.300z" fill="#2da94f" /><path d="M9.300 19.800L16 31.500l7-12z" fill="#fbc116" /><circle cx="16" cy="16" r="7.500" fill="#fff" /><circle cx="16" cy="16" r="6" fill="#2a7ae4" /></symbol>
    <symbol id="i-chromered" viewBox="0 0 32 32"><use href="#i-chrome" width="30" height="30" /><circle cx="23" cy="23" r="9" fill="#160405" /><path d="M20 21l5-3 1 6z" fill="#5d1518" /></symbol>
    <symbol id="i-chromegold" viewBox="0 0 34 34"><use href="#i-chrome" width="31" height="31" /><circle cx="24" cy="24" r="10" fill="#a5783f" /><path d="M23 15h2l.5 18h-2.500z" fill="#5a3c1c" /><circle cx="21" cy="20" r="2.600" fill="#c89c5c" /></symbol>
    <symbol id="i-note" viewBox="0 0 28 28"><path d="M10 2.500l13 1L17 26 3 23z" fill="url(#g-note)" /><path d="M21 3.500l4 .5-4 22-4.500-.5z" fill="#dfeaec" /></symbol>
    <symbol id="i-py" viewBox="0 0 32 32"><path d="M2 1h18l6 6v24H2z" fill="#f2f2f2" /><path d="M4 6h13M4 9h16M4 12h14M4 15h12M4 18h11M4 21h10M4 24h10M4 27h12M8 2v28M14 2v16" stroke="#9a9a9a" stroke-width=".9" /><path d="M17 18c0-4 1-5 4.500-5s4.500 1.500 4.500 4v4h-7c-2 0-3 1-3 3.500-3-1-3-6 1-6.500z" fill="#3572a5" /><path d="M29 18c3 1 3.500 7 0 8h-3c0 4-1 5-4 5s-4.500-1.500-4.500-4v-2c0-2 1-3 3-3H26c2 0 3-1 3-4z" fill="#ffd23f" /></symbol>
    <symbol id="i-cmd" viewBox="0 0 28 28"><path d="M0 3h28v22H0z" fill="#060606" stroke="#8b8b8b" stroke-width="1.200" /><path d="M0 3h28v3H0z" fill="#b9bdc4" /><path d="M6.500 9.500q-3-1-3 1.700t3 1.700M9 10.200v.9M9 12v1M11.500 9l2 4.300M15.500 13.300h4" fill="none" stroke="#eee" stroke-width="1.200" /></symbol>
    <symbol id="i-photos" viewBox="0 0 26 28"><path d="M0 1h26v26H0z" fill="#2aa4ef" /><path d="M0 17l9-8 17 18H0z" fill="#0c4f96" /><path d="M13 19l5-4 8 8v4h-6z" fill="#1766b4" /><circle cx="18" cy="7" r="2.300" fill="#fff" /></symbol>
    <symbol id="i-gear" viewBox="0 0 24 24"><circle cx="12" cy="12" r="6.500" fill="none" stroke="#fff" stroke-width="3" /><circle cx="12" cy="12" r="9.800" fill="none" stroke="#fff" stroke-width="3.600" stroke-dasharray="3.700 4" /></symbol>
    <symbol id="i-weather" viewBox="0 0 30 28"><path d="M7 26a7 7 0 0 1-.5-13.500A8.500 8.500 0 0 1 22 12a7 7 0 0 1 1 14z" fill="url(#g-cloud)" /><circle cx="25" cy="4" r="3.500" fill="#c42b1c" /></symbol>
    <symbol id="i-night" viewBox="0 0 32 30"><path d="M14 1c6 5 4 14-12 12.500 1 5 10 7 14 2.500C21 10 19 4 14 1z" fill="#f2a72e" /><path d="M10 29a6 6 0 0 1-.5-11.500A7.500 7.500 0 0 1 23 17a6 6 0 0 1 1 12z" fill="url(#g-cloud)" /><circle cx="27" cy="4.500" r="3.800" fill="#c42b1c" /></symbol>
    <symbol id="i-batt" viewBox="0 0 20 14"><path d="M.7 1.500h15.500v11H.7zM18.500 4.500v5" fill="none" stroke="#fff" stroke-width="1.500" /><path d="M3 4h7.500v6H3z" fill="#fff" /></symbol>
    <symbol id="i-net" viewBox="0 0 18 18"><path d="M4 3h13v9H6M11 12v4M7 16.500h8M1 1h4v5H1zM3 6v10" fill="none" stroke="#fff" stroke-width="1.200" /></symbol>
    <symbol id="i-mute" viewBox="0 0 18 16"><path d="M.8 5.500h3L8 1.500v13L3.800 10.500h-3zM11 5.500l5 5M16 5.500l-5 5" fill="none" stroke="#fff" stroke-width="1.200" /></symbol>
    <symbol id="i-notif" viewBox="0 0 18 18"><path d="M.7 1h16.600v12.500h-6L9 16.500 6.700 13.500h-6z" fill="none" stroke="#fff" stroke-width="1.300" /></symbol>
    <symbol id="i-notiffull" viewBox="0 0 20 20"><path d="M0 0h20v16h-7l-3.500 4V16H0z" fill="#fff" /><path d="M4 4.500h12M4 8h12M4 11.500h8" stroke="#1c2b42" stroke-width="1.500" /></symbol>
    <symbol id="i-wifi" viewBox="0 0 18 18"><g fill="none" stroke="#fff" stroke-width="1.200"><path d="M1.500 17A14 14 0 0 1 16.500 2.500M6 17A10 10 0 0 1 16.500 7M10 17a6 6 0 0 1 6.500-5.500" /></g><circle cx="15" cy="16" r="1.500" fill="#fff" /></symbol>
    <symbol id="i-meet" viewBox="0 0 18 20"><path d="M2 6h8v8H2zM10 9l4-2.500v7L10 11M4 2.500c3-1.500 6-1.500 9 0M4 17.500c3 1.500 6 1.500 9 0" fill="none" stroke="#fff" stroke-width="1.200" /></symbol>
    <symbol id="i-mp4" viewBox="0 0 16 20"><path d="M.5.500h11l4 4v15H.5z" fill="#fff" stroke="#8b95a5" /><path d="M3.500 7h9v8h-9z" fill="#1c7ed0" /><path d="M7 9.500l3 1.700-3 1.700z" fill="#fff" /></symbol>
    <symbol id="i-pdf" viewBox="0 0 16 20"><path d="M2 .7h9l4.300 4.300v14.300H2Q.7 19.300.7 18V2Q.7.700 2 .7z" fill="#fff" stroke="#e5403a" stroke-width="1.200" /><path d="M4 11c2-1 4-5 4-7M8 4c0 3 3 5 4.500 5.500C10 9 6 10 4 11z" fill="none" stroke="#e5261f" stroke-width="1.200" /><path d="M4.500 14.500h7" stroke="#333" stroke-width="2.500" stroke-dasharray="1.800 .7" /></symbol>
  </svg>

  <div class="screen">
    <!-- browser tabs -->
    <header class="tabs">
      <div class="tab first"><Ico n="github" :s="20" /><span class="ttl fade"><span v-fit="230">IBM-EPBL/IBM-Project-19581-1659</span></span><Ico n="x" :s="15" /></div>
      <div class="tab active"><Ico n="globe" :s="19" /><span class="ttl"><span v-fit="209">Node Red-flow.png (1366×768)</span></span><Ico n="x" :s="15" /></div>
      <div class="tab third"><Ico n="ibm" :s="22" /><span class="ttl"><span v-fit="69">IBM Cloud</span></span><Ico n="x" :s="15" /></div>
      <div class="tab fourth"><Ico n="ibm" :s="22" /><span class="ttl"><span v-fit="128">IBM Cloud Account</span></span><Ico n="x" :s="15" /></div>
      <Ico n="plus" :s="16" class="newtab" />
      <div class="winctl"><Ico n="down" :s="14" /><Ico n="min" :s="14" /><Ico n="restore" :s="15" /><Ico n="xthin" :s="14" /></div>
    </header>
    <div class="toolbar">
      <div class="nav"><Ico n="back" :s="18" /><Ico n="fwd" :s="18" class="dim" /><Ico n="reload" :s="18" /></div>
      <div class="url"><Ico n="lock" :s="12" :hh="15" /><span class="utext"><span v-fit="211" class="host">raw.githubusercontent.com</span><span v-fit="910" class="path">/IBM-EPBL/IBM-Project-54177-1661764653/main/Project%20Development%20Phase/Sprint-4/Node%20Red-flow.png</span></span><Ico n="share" :s="20" /><Ico n="star" :s="21" class="star" /></div>
      <Ico n="panel" :s="18" class="pnl" /><Ico n="avatar" :s="28" class="avt" /><Ico n="dots" :s="4" :hh="17" class="dts" />
    </div>
    <div class="bookmarks">
      <div v-for="(m, i) in marks" :key="i" class="mark" :style="{ width: markWidth(i) + 'px' }">
        <span class="mic" :style="{ width: m.tx - m.x + 'px' }"><Ico :n="m.icon" :s="m.icon === 'globe' ? 18 : 20" :hh="m.icon === 'gmail' ? 16 : m.icon === 'globe' ? 18 : 20" /></span><span v-fit="m.w" class="mt">{{ m.text }}</span>
      </div>
      <span class="more">»</span>
    </div>

    <!-- picture page -->
    <main class="page">
      <div class="shot">
        <div class="itabs">
          <div v-for="(t, i) in innerTabs" :key="i" class="itab" :class="{ on: t.on }">
            <span class="iic"><Ico :n="t.icon" :s="t.icon === 'pin' ? 13 : 17" :hh="17" /></span>
            <span class="itt fade" :class="{ mute: t.mute, solid: t.mute || t.check }"><Ico v-if="t.mute" n="speaker" :s="13" /><Ico v-else-if="t.check" n="check" :s="16" /><template v-else>{{ t.text }}</template></span>
            <Ico n="x" :s="11" />
          </div>
          <Ico n="plus" :s="13" class="inew" />
          <div class="iwin"><Ico n="down" :s="12" /><Ico n="min" :s="12" /><Ico n="restore" :s="12" /><Ico n="xthin" :s="12" /></div>
        </div>
        <div class="ibar">
          <div class="inav"><Ico n="back" :s="15" /><Ico n="fwd" :s="15" class="dim" /><Ico n="reload" :s="15" /></div>
          <div class="iurl"><Ico n="nrfav" :s="18" /><span class="iu"><span v-fit="43">http://</span><span v-fit="98" class="host">169.51.206.183</span><span v-fit="254">:32174/red/#flow/067071b611d33060</span></span></div>
          <div class="iright"><Ico n="queue" :s="17" /><Ico n="panel" :s="15" /><Ico n="avred" :s="24" /></div>
          <div class="update"><span v-fit="42">Update</span><Ico n="dots" :s="4" :hh="14" /></div>
        </div>
        <div class="ibook">
          <Ico n="gmail" :s="16" :hh="13" /><span v-fit="33" class="b1">Gmail</span>
          <Ico n="yt" :s="18" :hh="14" /><span v-fit="49" class="b2">YouTube</span>
          <Ico n="pin" :s="13" :hh="17" /><span v-fit="32" class="b3">Maps</span>
        </div>
        <div class="nrhead">
          <Ico n="nrlogo" :s="38" :hh="16" /><span v-fit="63" class="nrname">Node-RED</span>
          <div class="deploy"><Ico n="deploy" :s="24" :hh="16" /><span v-fit="35">Deploy</span><Ico n="caret" :s="8" /></div>
          <div class="burger"><i></i><i></i><i></i></div>
        </div>

        <div class="editor">
          <aside class="palette">
            <div class="filter"><Ico n="find" :s="9" /><span v-fit="55">filter nodes</span></div>
            <div class="pbody">
              <div class="plist">
                <section v-for="s in sections" :key="s.name" :class="{ cut: !s.name }">
                  <h4 v-if="s.name"><Ico n="chev" :s="7" /><span>{{ s.name }}</span></h4>
                  <div class="pnodes">
                    <div v-for="n in s.nodes" :key="n.label" class="pnode" :class="{ right: n.right }" :style="{ background: n.color }">
                      <span class="pic"><Ico :n="n.icon" :s="22" /></span><span class="plabel">{{ n.label }}</span>
                      <i v-if="n.in" class="port l"></i><i v-if="n.out" class="port r"></i>
                    </div>
                  </div>
                </section>
              </div>
              <div class="vs pvs"><Ico n="caret" :s="8" class="flip" /><b></b><Ico n="caret" :s="8" /></div>
            </div>
            <div class="foot pfoot"><span class="fb"><svg width="8" height="9"><path d="M1 4l3-3 3 3M1 8l3-3 3 3" /></svg></span><span class="fb"><svg width="8" height="9"><path d="M1 1l3 3 3-3M1 5l3 3 3-3" /></svg></span></div>
          </aside>

          <section class="work">
            <div class="wtabs"><div class="wtab"><span v-fit="34">Flow 2</span></div><div class="wbtn"><Ico n="caret" :s="9" class="rt" /><svg width="10" height="10"><path d="M5 0v10M0 5h10" stroke="#777" stroke-width="2.500" /></svg><Ico n="caret" :s="7" /></div></div>
            <div class="wmain">
              <svg class="canvas" width="1177" height="574" viewBox="368 302 1177 574">
                <defs><pattern id="grid" x="382" y="316" width="14.580" height="14.580" patternUnits="userSpaceOnUse"><path d="M0 .5H14.580M.5 0V14.580" stroke="#ececec" stroke-width="1" /></pattern></defs>
                <path d="M368 302h1177v574H368z" fill="#fff" /><path d="M368 302h1177v574H368z" fill="url(#grid)" />
                <path v-for="l in links" :key="l.join()" :d="wire(l)" fill="none" stroke="#999" stroke-width="2.100" />
                <g v-for="(n, k) in nodes" :key="k">
                  <template v-if="n.button === 'left'"><rect :x="n.x - 18" :y="n.y - 9.500" width="24" height="19" rx="3" fill="#f4f4f4" stroke="#bbb" /><rect :x="n.x - 14.500" :y="n.y - 6.500" width="12" height="13" rx="2" :fill="n.c" stroke="#999" /></template>
                  <template v-else-if="n.button"><rect :x="n.r - 8" :y="n.y - 9.500" :width="n.button === 'on' ? 27 : 21" height="19" rx="3" fill="#f4f4f4" stroke="#bbb" /><rect :x="n.r + (n.button === 'on' ? 3.500 : -3)" :y="n.y - 6.500" width="12.500" height="13" rx="2" :fill="n.button === 'on' ? n.c : '#e3ebe1'" stroke="#aaa" /></template>
                  <rect :x="n.x" :y="n.y - 11" :width="n.r - n.x" height="22" rx="3.300" :fill="n.c" :stroke="n.sel ? '#ff7f0e' : '#a3a3a3'" :stroke-width="n.sel ? 1.500 : 1" />
                  <path :d="n.right ? `M${n.r - 22} ${n.y - 10.500}h19a2.500 2.500 0 0 1 2.500 2.500v16a2.500 2.500 0 0 1-2.500 2.500h-19z` : `M${n.x + 22} ${n.y - 10.500}h-19a2.500 2.500 0 0 0-2.500 2.500v16a2.500 2.500 0 0 0 2.500 2.500h19z`" fill="#000" opacity=".055" />
                  <use :href="'#i-' + n.icon" :x="n.right ? n.r - 22 : n.x" :y="n.y - 11" width="22" height="22" />
                  <text :x="n.right ? n.r - 28.200 : n.x + 27.700" :y="n.y + 3.800" :text-anchor="n.right ? 'end' : 'start'" :font-style="n.it ? 'italic' : 'normal'" class="nl">{{ n.label }}</text>
                  <rect v-if="!n.noIn" :x="n.x - 3.700" :y="n.y - 3.700" width="7.400" height="7.400" rx="2" class="pt" />
                  <template v-if="n.two"><rect :x="n.r - 3.700" :y="n.y - 8.500" width="7.400" height="7.400" rx="2" class="pt" /><rect :x="n.r - 3.700" :y="n.y + 1.300" width="7.400" height="7.400" rx="2" class="pt" /></template>
                  <rect v-else-if="!n.noOut" :x="n.r - 3.700" :y="n.y - 3.700" width="7.400" height="7.400" rx="2" class="pt" />
                  <template v-if="n.status"><rect :x="n.x + 6.500" :y="n.y + 13.700" width="7" height="7" rx="1.500" :fill="n.status.ring ? '#fff' : n.status.c" :stroke="n.status.c" stroke-width="1.700" /><text :x="n.x + 17" :y="n.y + 20.600" class="sl">{{ n.status.t }}</text></template>
                </g>
              </svg>
              <div class="vs wvs"><Ico n="caret" :s="8" class="flip lite" /><b></b><Ico n="caret" :s="8" /></div>
            </div>
            <div class="hs"><Ico n="caret" :s="8" class="lt lite" /><b></b><Ico n="caret" :s="8" class="rt" /></div>
            <div class="foot wfoot"><span class="fb map"><svg width="11" height="9"><path d="M.5 1.500l3-1 3.500 1 3.500-1v7l-3.500 1-3.500-1-3 1zM3.500.5v7M7 1.500v7" /></svg></span><span class="fb blue"><svg width="8" height="8"><path d="M0 4h8" stroke-width="2.200" /></svg></span><span class="fb"><svg width="9" height="9"><circle cx="4.500" cy="4.500" r="3.500" /></svg></span><span class="fb"><svg width="8" height="8"><path d="M0 4h8M4 0v8" stroke-width="2.200" /></svg></span></div>
          </section>
          <div class="divider"><i></i></div>
          <aside class="side">
            <div class="stabs"><div class="stab"><Ico n="bug" :s="10" :hh="11" /><span v-fit="34">debug</span></div><Ico n="caret" :s="8" /></div>
            <div class="stool"><span class="sbtn a"><Ico n="filter" :s="9" /><span v-fit="42">all nodes</span><Ico n="caret" :s="7" /></span><span class="sbtn c"><Ico n="trash" :s="9" /><span>all</span></span></div>
            <div class="smain"><div class="vs svs"><Ico n="caret" :s="8" class="flip lite" /><Ico n="caret" :s="8" class="lite" /></div></div>
            <div class="hs shs"><Ico n="caret" :s="8" class="lt lite" /><b></b><Ico n="caret" :s="8" class="rt" /></div>
            <div class="foot sfoot"><span class="fb"><svg width="11" height="9"><path d="M.7.700h9.600v5.500H.7zM3 8.300h5" stroke-width="1.300" /></svg></span></div>
          </aside>
        </div>

        <div class="itask">
          <div class="istart"><Ico n="win" :s="18" /></div>
          <div class="isearch"><Ico n="search" :s="18" /><span v-fit="138">Type here to search</span></div>
          <div class="icell w52"><Ico n="ring" :s="19" /></div><div class="icell w54"><Ico n="view" :s="18" /></div>
          <div v-for="(a, i) in innerApps" :key="i" class="icell" :class="{ on: a.on }"><Ico :n="a.n" :s="a.s" /><i v-if="a.u" class="ul" :class="{ two: a.u === 2 }"></i></div>
          <div class="itray">
            <Ico n="weather" :s="28" :hh="27" /><span v-fit="32" class="deg">28°C</span>
            <Ico n="up" :s="13" class="t1" /><Ico n="batt" :s="17" :hh="13" class="t2" /><Ico n="net" :s="17" class="t3" /><Ico n="mute" :s="17" :hh="15" class="t4" />
            <span v-fit="25" class="ieng">ENG</span>
            <div class="iclock"><span v-fit="29">12:35</span><span v-fit="62">14-11-2022</span></div>
            <Ico n="notif" :s="18" />
          </div>
        </div>
      </div>
    </main>

    <!-- downloads -->
    <div class="shelf">
      <div class="dl d1"><Ico n="mp4" :s="15" :hh="18" /><span v-fit="174">Node red output-....mp4</span><Ico n="upbold" :s="15" /></div>
      <div class="dl d2"><Ico n="pdf" :s="16" :hh="20" /><span v-fit="142">simulation code.pdf</span><Ico n="upbold" :s="15" /></div>
      <div class="showall"><span v-fit="57">Show all</span></div><Ico n="x" :s="15" class="dx" />
    </div>

    <!-- desktop taskbar -->
    <footer class="task">
      <div class="cell s"><Ico n="win" :s="21" /></div><div class="cell s"><Ico n="search" :s="21" /></div>
      <div class="cell s"><Ico n="ring" :s="22" /></div><div class="cell s gap"><Ico n="view" :s="21" /></div>
      <div v-for="a in apps" :key="a.n" class="cell" :class="{ on: a.on }"><Ico :n="a.n" :s="a.s" /><span v-if="a.badge" class="badge">{{ a.badge }}</span><i v-if="a.u" class="ul" :class="{ two: a.u === 2 }"></i></div>
      <div class="tray">
        <Ico n="night" :s="32" :hh="30" /><Ico n="up" :s="16" class="o1" /><Ico n="wifi" :s="18" class="o2" /><Ico n="meet" :s="18" :hh="20" class="o3" /><Ico n="batt" :s="20" :hh="15" class="o4" />
        <div class="col lang"><span v-fit="29">ENG</span><span v-fit="15">IN</span></div>
        <div class="col time"><span v-fit="60">10:55 PM</span><span v-fit="76">11/14/2022</span></div>
        <div class="nf"><Ico n="notiffull" :s="21" /><span class="badge">7</span></div>
      </div>
    </footer>
  </div>
</template>

<style>
html, body { margin: 0; overflow: hidden; }
</style>

<style scoped>
.sheet { position: absolute; visibility: hidden; }
.screen, .screen * { box-sizing: border-box; }
.screen { width: 1920px; height: 1080px; display: flex; flex-direction: column; overflow: hidden; font-family: "Open Sans", "Noto Sans", sans-serif; font-size: 16px; color: #1f2530; white-space: nowrap; line-height: 1.2; }
span { flex: none; transform-origin: 0 50%; }
.ttl > span, .utext > span, .iu > span { display: inline-block; }
.fade { -webkit-mask-image: linear-gradient(90deg, #000 70%, transparent); mask-image: linear-gradient(90deg, #000 70%, transparent); }
.fade.solid { -webkit-mask-image: none; mask-image: none; }

.tabs { height: 43px; background: #85ace9; display: flex; align-items: center; flex: none; }
.tab { height: 43px; display: flex; align-items: center; padding-bottom: 1px; }
.ttl { overflow: hidden; }
.first { width: 309px; padding-left: 25px; }
.first .ttl { width: 220px; margin: 0 8px 0 10px; }
.first .fade { -webkit-mask-image: linear-gradient(90deg, #000 86%, transparent); mask-image: linear-gradient(90deg, #000 86%, transparent); }
.active { width: 300px; background: #cbdcf6; border-radius: 11px 11px 0 0; padding-left: 16px; }
.active .ttl { width: 216px; margin: 0 11px 0 10px; }
.third { width: 298px; padding-left: 13px; }
.third .ttl { width: 219px; margin: 0 8.500px 0 8px; }
.fourth { width: 299px; padding-left: 12px; }
.fourth .ttl { width: 220px; margin: 0 8px 0 10px; }
.third, .fourth { background: linear-gradient(#47618f, #47618f) right 9px / 1px 25px no-repeat; }
.newtab { margin-left: 20px; }
.winctl { margin-left: auto; display: flex; gap: 43px; padding: 0 22px 5px 0; color: #10151f; }

.toolbar { height: 42px; background: #cbdcf6; display: flex; align-items: center; flex: none; padding-top: 2px; }
.nav { width: 135px; padding-left: 18px; display: flex; gap: 22px; color: #1b1f26; }
.dim { opacity: .4; }
.url { width: 1650px; height: 35px; margin-top: 3px; border-radius: 18px; background: #f4f7fd; display: flex; align-items: center; padding: 0 12px 2px 16px; font-size: 18.500px; }
.utext { flex: 1; margin-left: 14px; }
.host { color: #202124; }
.path { color: #5f656e; }
.star { margin-left: 19px; }
.pnl { margin-left: 18px; color: #1f2328; }
.avt { margin-left: 18px; }
.dts { margin-left: 24px; }

.bookmarks { height: 44px; flex: none; background: #cbdcf6; border-bottom: 1px solid #a3b1cb; display: flex; align-items: center; padding: 0 0 1px 18px; font-size: 15.800px; }
.mark { display: flex; align-items: center; flex: none; }
.mic { display: flex; }
.more { margin-left: 16px; font-weight: 600; }

.page { height: 830px; flex: none; background: #0e0e0e; padding-left: 222px; }
.shot { width: 1476px; height: 830px; background: #fff; display: flex; flex-direction: column; overflow: hidden; }
.itabs { height: 36px; flex: none; background: #dee1e6; display: flex; align-items: center; padding-left: 8.500px; font-size: 13px; color: #5c6066; }
.itab { width: 90.400px; height: 36px; flex: none; display: flex; align-items: center; padding: 1px 0 0 12px; background: linear-gradient(#8a8d91, #8a8d91) right 7px / 1px 22px no-repeat; color: #5c6066; }
.itab.on { width: 93px; background: #fff; border-radius: 9px 9px 0 0; padding-left: 13px; }
.iic { width: 26.500px; display: flex; color: #5f6368; }
.itt { width: 21px; margin-right: 8px; overflow: hidden; }
.itt.mute { padding-left: 6px; }
.itab > svg { color: #43474c; }
.inew { margin-left: 17px; color: #333; }
.iwin { margin-left: auto; display: flex; gap: 37.500px; padding: 0 19px 5px 0; color: #111; }
.ibar { height: 40px; flex: none; display: flex; align-items: center; }
.inav { width: 117px; padding-left: 16px; display: flex; gap: 20px; color: #55585d; }
.iurl { width: 1149px; height: 30px; border-radius: 15px; background: #f1f3f4; display: flex; align-items: center; padding-left: 10px; font-size: 14.500px; color: #6c7074; }
.iu { margin-left: 9px; }
.iright { width: 113px; padding-left: 15px; display: flex; align-items: center; gap: 18px; color: #5f6368; }
.iright svg:last-child { margin-left: -2px; }
.update { width: 88px; height: 30px; border: 1.500px solid #35945a; border-radius: 16px; background: #e8f2ec; color: #268049; display: flex; align-items: center; font-size: 13px; padding-left: 13px; gap: 16px; }
.ibook { height: 35px; flex: none; display: flex; align-items: center; padding: 0 0 5px 16px; font-size: 13px; color: #45484d; }
.b1 { margin-left: 9px; } .b1 + svg { margin-left: 18px; }
.b2 { margin-left: 8px; } .b2 + svg { margin-left: 20px; }
.b3 { margin-left: 10px; }
.nrhead { height: 33px; flex: none; background: #000; border-top: 1px solid #888; display: flex; align-items: center; padding: 0 16px 0 16px; font-family: "Liberation Sans", sans-serif; color: #c7c7c7; font-size: 13px; }
.nrname { margin-left: 4px; font-size: 14px; }
.deploy { margin-left: auto; width: 106px; height: 24px; background: #444; display: flex; align-items: center; padding-left: 9px; color: #8d8d8d; font-size: 12.500px; gap: 9px; }
.deploy svg:last-child { color: #ccc; margin-left: 7px; }
.burger { width: 15px; margin-left: 28.500px; display: flex; flex-direction: column; gap: 2px; }
.burger i { height: 2.700px; background: #ccc; }

.editor { height: 643px; flex: none; display: flex; background: #f3f3f3; font-family: "Liberation Sans", sans-serif; border-bottom: 1.500px solid #b5b5b5; color: #777; }
.palette { width: 146px; flex: none; display: flex; flex-direction: column; border-right: 1px solid #bbb; border-left: 1px solid #ccc; }
.filter { height: 29px; flex: none; background: #fff; border-bottom: 1px solid #bbb; display: flex; align-items: center; padding: 3px 0 0 9px; gap: 3px; font-size: 11.500px; color: #888; border-top: 1px solid #ccc; }
.pbody { height: 591px; flex: none; display: flex; overflow: hidden; background: #fff; }
.plist { width: 126px; flex: none; }
.plist h4 { height: 32px; margin: 0; border-top: 1px solid #ccc; background: #f3f3f3; display: flex; align-items: center; padding-left: 9px; gap: 11px; font-size: 12.300px; color: #444; font-weight: 700; }
.pnodes { padding: 15.200px 0 14.600px 13px; display: flex; flex-direction: column; gap: 9.100px; }
.cut { height: 37.700px; overflow: hidden; }
.cut .pnodes { padding: 0 0 0 13px; margin-top: -1px; }
.pnode { position: relative; width: 99px; height: 24px; border: 1px solid #999; border-radius: 4px; display: flex; align-items: center; font-size: 11px; color: #3a3a3a; }
.pnode.right { flex-direction: row-reverse; }
.pic { width: 26px; height: 22px; background: rgba(0, 0, 0, .055); border-right: 1px solid rgba(0, 0, 0, .09); padding-left: 1px; }
.right .pic { border-right: 0; border-left: 1px solid rgba(0, 0, 0, .09); }
.plabel { flex: 1; text-align: center; }
.port { position: absolute; top: 7px; width: 8px; height: 8px; border: 1px solid #999; background: #d9d9d9; border-radius: 2px; }
.port.l { left: -4.500px; } .port.r { right: -4.500px; }
.vs { width: 18px; flex: none; background: #f0f0f0; display: flex; flex-direction: column; align-items: center; color: #444; padding: 5px 0; }
.vs b { width: 14.500px; background: #c1c1c1; }
.vs svg:last-child { margin-top: auto; }
.flip { transform: rotate(180deg); } .rt { transform: rotate(-90deg); } .lt { transform: rotate(90deg); } .lite { color: #a0a0a0; }
.pvs { width: 18px; } .pvs b { margin-top: 163px; height: 81px; }
.foot { height: 21px; flex: none; background: #f3f3f3; border-top: 1px solid #bbb; display: flex; align-items: center; justify-content: flex-end; }
.fb { width: 15.500px; height: 16px; background: #fff; border: 1px solid #ccc; display: flex; align-items: center; justify-content: center; }
.fb svg { fill: none; stroke: #888; }
.pfoot { padding-right: 5px; }
.work { width: 1195px; flex: none; display: flex; flex-direction: column; border-right: 1px solid #bbb; }
.wtabs { height: 29px; flex: none; background: #fff; border-bottom: 1px solid #bbb; border-top: 1px solid #ccc; display: flex; padding-left: 19px; }
.wtab { width: 162px; height: 27px; margin: 2px 0 -1px; border: 1px solid #bbb; border-bottom-color: #fff; background: #fff; font-weight: 700; font-size: 11.500px; color: #555; display: flex; align-items: center; padding: 0 0 2px 11px; }
.wbtn { margin-left: auto; width: 68px; border-left: 1px solid #bbb; display: flex; align-items: center; gap: 12px; padding: 0 0 1px 3px; background: #fff; }
.wbtn svg:nth-child(3) { margin-left: 5px; }
.wmain { height: 574px; flex: none; display: flex; background: #f0f0f0; }
.canvas { flex: none; display: block; }
.nl { font: 10.250px "Liberation Sans", sans-serif; fill: #3a3a3a; }
.nl[font-style="italic"] { font-style: italic; }
.sl { font: 9px "Liberation Sans", sans-serif; fill: #959595; }
.pt { fill: #d9d9d9; stroke: #999; stroke-width: .9; }
.wvs { width: 17px; padding: 6px 0 5px; } .wvs b { margin-top: 5px; height: 84px; }
.hs { height: 17px; flex: none; background: #f0f0f0; display: flex; align-items: center; color: #444; padding: 0 22px 0 5px; }
.hs b { height: 14px; width: 367px; margin: 0 auto 0 5px; background: #c1c1c1; }
.wfoot { padding-right: 7.500px; } .map { margin-right: 3px; } .blue { border: 1.500px solid #6d9fe0; }
.divider { width: 8px; flex: none; background: #f3f3f3; display: flex; align-items: center; justify-content: center; }
.divider i { width: 3px; height: 41px; background: #ccc; }
.side { width: 127px; flex: none; border-left: 1px solid #bbb; border-right: 1px solid #bbb; display: flex; flex-direction: column; overflow: hidden; }
.stabs { height: 29px; flex: none; background: #fff; border-bottom: 1px solid #bbb; border-top: 1px solid #ccc; display: flex; align-items: center; padding-left: 2px; }
.stab { width: 96px; height: 27px; margin: 2px 9px -1px 0; background: #fff; border: solid #bbb; border-width: 1px 0 0 1px; display: flex; align-items: center; gap: 4px; padding: 0 0 2px 10px; font-size: 11.500px; color: #444; font-weight: 700; }
.stool { height: 36px; flex: none; border-bottom: 1px solid #ccc; display: flex; align-items: center; gap: 8px; padding-left: 8px; font-size: 10px; }
.sbtn { height: 22px; background: #fff; border: 1px solid #ccc; display: flex; align-items: center; padding-left: 6px; gap: 3px; width: 79px; margin-bottom: 1px; }
.sbtn svg:nth-child(3) { margin-left: 3px; }
.smain { height: 538px; flex: none; background: #fff; display: flex; justify-content: flex-end; }
.shs { padding: 0 5px 0 4px; } .shs b { width: 73px; }
.sfoot { padding-right: 5px; }

.itask { height: 43px; flex: none; background: linear-gradient(90deg, #3c3c3c, #454545 45%, #3c3c3c); display: flex; }
.istart { width: 52px; background: #2e2e2e; display: flex; align-items: center; justify-content: center; padding-bottom: 1px; }
.isearch { width: 371.500px; background: #f2f2f2; border: 1px solid #aaa; display: flex; align-items: center; padding-left: 12px; gap: 12px; font-size: 15.500px; color: #3c3c3c; }
.icell { width: 51.400px; flex: none; display: flex; align-items: center; justify-content: center; position: relative; }
.w52 { width: 52px; } .w54 { width: 54px; }
.icell.on { width: 52.400px; background: linear-gradient(90deg, #666 92%, #555 92%); padding-left: 5px; }
.ul { position: absolute; bottom: 0; left: 5px; right: 5px; height: 3px; background: #76b9ed; }
.ul.two { background: linear-gradient(90deg, #76b9ed 80%, #5b92bf 80%); }
.on .ul { left: 0; right: 0; }
.itray { flex: 1; display: flex; align-items: center; color: #f2f2f2; font-size: 13.500px; padding-left: 24px; border-right: 1px solid #888; }
.deg { margin-left: 7px; font-size: 15px; } .t1 { margin-left: 19px; } .t2 { margin-left: 13px; } .t3 { margin-left: 7.500px; } .t4 { margin-left: 9px; }
.ieng { margin-left: 11.500px; }
.iclock { width: 62px; margin: 0 19px 0 14px; display: flex; flex-direction: column; align-items: center; gap: 3px; font-size: 13px; }
.iclock span { transform-origin: 50% 50%; margin-right: 0 !important; }

.shelf { height: 71px; flex: none; background: #cbdcf6; border-top: 1px solid #a3b1cb; display: flex; align-items: center; font-size: 16.500px; padding-top: 2px; }
.dl { height: 57px; display: flex; align-items: center; border-right: 1.500px solid #98a6c0; padding-bottom: 2px; }
.d1 { width: 297px; padding-left: 27px; gap: 24px; } .d1 span { margin-left: -4px; }
.d2 { width: 292px; padding-left: 23px; } .d2 span { margin-left: 18px; } .d2 svg:last-child { margin-left: 56px; }
.showall { margin-left: auto; width: 97px; height: 41px; border: 1px solid #ccd6e2; border-radius: 5px; margin-bottom: 3px; color: #1a56bd; font-size: 16px; display: flex; align-items: center; padding-left: 18px; }
.dx { margin: 0 15px 3px 14px; }

.task { height: 50px; flex: none; display: flex; background: linear-gradient(90deg, #1f3542 0, #213843 190px, #3d4448 330px, #3f4345 900px, #44443f 1000px, #24343c 1080px, #1e323e 1200px, #1b2e3f 1500px, #1a2941 1700px, #1a2740); color: #fff; }
.cell { width: 62px; display: flex; align-items: center; justify-content: center; position: relative; }
.cell.s { width: 60px; } .cell.gap { margin-right: 3px; }
.cell.on { background: #686c6f; }
.badge { position: absolute; right: 3px; bottom: 4px; min-width: 25px; height: 25px; border-radius: 13px; border: 1.500px solid #aaa; background: #2d3133; color: #fff; font-size: 15.500px; font-weight: 600; display: flex; align-items: center; justify-content: center; letter-spacing: -.4px; }
.tray { margin-left: auto; width: 407px; display: flex; align-items: center; font-size: 16px; border-right: 1px solid #8a93a0; margin-right: 5px; }
.o1 { margin-left: 36.500px; } .o2 { margin-left: 24px; } .o3 { margin-left: 22px; } .o4 { margin-left: 21px; }
.col { display: flex; flex-direction: column; align-items: center; gap: 4px; padding-top: 1px; }
.col span { transform-origin: 50% 50%; margin-right: 0 !important; }
.lang { width: 30px; margin-left: 17px; } .time { width: 76px; margin-left: 11px; }
.nf { position: relative; margin-left: 18.500px; padding-bottom: 4px; } .nf .badge { right: -11px; bottom: -9px; min-width: 22px; height: 22px; }
</style>
